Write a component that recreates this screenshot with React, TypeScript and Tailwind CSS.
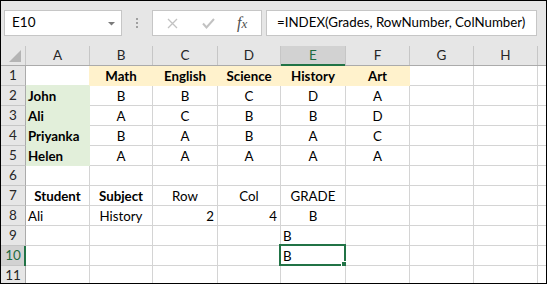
import React from "react";

type Cell = { t?: string; a?: "l" | "c" | "r"; b?: boolean; bg?: string };

const ORANGE = "#fff2cc";
const GREEN = "#e2efda";
const GRID = "#d4d4d4";

const COLW = [64, 63, 65, 63, 65, 64, 64, 64, 9];
const LETTERS = ["A", "B", "C", "D", "E", "F", "G", "H", ""];

const e = (): Cell => ({});
const rows: Cell[][] = [
  [e(), { t: "Math", a: "c", b: true, bg: ORANGE }, { t: "English", a: "c", b: true, bg: ORANGE }, { t: "Science", a: "c", b: true, bg: ORANGE }, { t: "History", a: "c", b: true, bg: ORANGE }, { t: "Art", a: "c", b: true, bg: ORANGE }, e(), e(), e()],
  [{ t: "John", a: "l", b: true, bg: GREEN }, { t: "B", a: "c" }, { t: "B", a: "c" }, { t: "C", a: "c" }, { t: "D", a: "c" }, { t: "A", a: "c" }, e(), e(), e()],
  [{ t: "Ali", a: "l", b: true, bg: GREEN }, { t: "A", a: "c" }, { t: "C", a: "c" }, { t: "B", a: "c" }, { t: "B", a: "c" }, { t: "D", a: "c" }, e(), e(), e()],
  [{ t: "Priyanka", a: "l", b: true, bg: GREEN }, { t: "B", a: "c" }, { t: "A", a: "c" }, { t: "B", a: "c" }, { t: "A", a: "c" }, { t: "C", a: "c" }, e(), e(), e()],
  [{ t: "Helen", a: "l", b: true, bg: GREEN }, { t: "A", a: "c" }, { t: "A", a: "c" }, { t: "A", a: "c" }, { t: "A", a: "c" }, { t: "A", a: "c" }, e(), e(), e()],
  [e(), e(), e(), e(), e(), e(), e(), e(), e()],
  [{ t: "Student", a: "c", b: true }, { t: "Subject", a: "c", b: true }, { t: "Row", a: "c" }, { t: "Col", a: "c" }, { t: "GRADE", a: "c" }, e(), e(), e(), e()],
  [{ t: "Ali", a: "l" }, { t: "History", a: "c" }, { t: "2", a: "r" }, { t: "4", a: "r" }, { t: "B", a: "c" }, e(), e(), e(), e()],
  [e(), e(), e(), e(), { t: "B", a: "l" }, e(), e(), e(), e()],
  [e(), e(), e(), e(), { t: "B", a: "l" }, e(), e(), e(), e()],
  [e(), e(), e(), e(), e(), e(), e(), e(), e()],
];

export default function App() {
  return (
    <div
      className="w-[547px] h-[284px] border border-black overflow-hidden bg-white flex flex-col text-black"
      style={{ fontFamily: "Lato, 'Noto Sans', sans-serif" }}
    >
      {/* toolbar */}
      <div className="h-[45px] shrink-0 bg-[#e6e6e6] flex items-start pt-[9px] pl-[3px]">
        <div className="w-[118px] h-[26px] bg-white border border-[#c6c6c6] flex items-center pl-[7px] pr-[6px] justify-between">
          <span className="text-[13.5px] leading-none">E10</span>
          <svg width="7" height="4" viewBox="0 0 7 4" className="mt-[1px]">
            <polygon points="0,0 7,0 3.5,3.5" fill="#7a7a7a" />
          </svg>
        </div>
        <div className="w-[30px] h-[26px] flex flex-col items-center justify-center gap-[2px]">
          <div className="w-[2px] h-[2px] bg-[#a0a0a0]" />
          <div className="w-[2px] h-[2px] bg-[#a0a0a0]" />
          <div className="w-[2px] h-[2px] bg-[#a0a0a0]" />
        </div>
        <div className="w-[110px] h-[26px] bg-white border border-[#c6c6c6] flex items-center pl-[14px]">
          <svg width="11" height="11" viewBox="0 0 11 11">
            <path d="M1 1 L10 10 M10 1 L1 10" stroke="#c2c2c2" strokeWidth="1.3" fill="none" />
          </svg>
          <svg width="13" height="11" viewBox="0 0 13 11" className="ml-[24px]">
            <path d="M1 5.5 L4.5 9.5 L12 1" stroke="#c2c2c2" strokeWidth="2" fill="none" />
          </svg>
          <span
            className="ml-[22px] text-[16px] italic text-[#505050] leading-none"
            style={{ fontFamily: "'Liberation Serif', serif" }}
          >
            f<span className="text-[13px]">x</span>
          </span>
        </div>
        <div className="ml-[4px] w-[271px] h-[26px] bg-white border border-[#c6c6c6] flex items-center pl-[10px] overflow-hidden whitespace-nowrap">
          <span className="text-[13.3px] leading-none">=INDEX(Grades, RowNumber, ColNumber)</span>
        </div>
      </div>

      {/* column headers */}
      <div className="h-[20px] shrink-0 flex bg-[#e6e6e6] border-b border-[#ababab]">
        <div className="w-[25px] shrink-0 h-full border-r border-[#c6c6c6] relative">
          <svg width="25" height="19" viewBox="0 0 25 19" className="absolute left-0 top-0">
            <polygon points="20,4 20,16 8,16" fill="#b4b4b4" />
          </svg>
        </div>
        {LETTERS.map((l, i) => {
          const sel = l === "E";
          return (
            <div
              key={i}
              className={
                "shrink-0 h-full flex items-center justify-center text-[13.5px] border-r border-[#c6c6c6] relative " +
                (sel ? "bg-[#d2d2d2] text-[#1e6b41]" : "text-[#262626]")
              }
              style={{ width: COLW[i] }}
            >
              <span className="leading-none">{l}</span>
              {sel && <div className="absolute left-0 right-0 bottom-[-1px] h-[2px] bg-[#217346]" />}
            </div>
          );
        })}
      </div>

      {/* rows */}
      {rows.map((r, ri) => {
        const rowSel = ri === 9;
        const below = rows[ri + 1];
        return (
          <div key={ri} className="h-[20px] shrink-0 flex">
            <div
              className={
                "w-[25px] shrink-0 h-full flex items-center justify-center text-[13.5px] border-b border-[#c6c6c6] relative pt-[1px] " +
                (rowSel ? "bg-[#d2d2d2] text-[#1e6b41]" : "bg-[#e6e6e6] text-[#262626]")
              }
              style={{ borderRight: "1px solid #ababab" }}
            >
              <span className="leading-none">{ri + 1}</span>
              {rowSel && <div className="absolute right-[-1px] top-0 bottom-[-1px] w-[2px] bg-[#217346]" />}
            </div>
            {r.map((c, ci) => {
              const right = r[ci + 1];
              const down = below ? below[ci] : undefined;
              const rc = c.bg ?? right?.bg ?? GRID;
              const bc = c.bg ?? down?.bg ?? GRID;
              const sel = ri === 9 && ci === 4;
              return (
                <div
                  key={ci}
                  className={
                    "shrink-0 h-full flex items-center relative whitespace-nowrap text-[13.3px] pt-[2px] " +
                    (c.a === "c" ? "justify-center " : c.a === "r" ? "justify-end pr-[3px] " : "justify-start pl-[2px] ") +
                    (c.b ? "font-bold" : "")
                  }
                  style={{
                    width: COLW[ci],
                    background: c.bg ?? "#ffffff",
                    borderRight: `1px solid ${rc}`,
                    borderBottom: `1px solid ${bc}`,
                  }}
                >
                  <span className="leading-none">{c.t}</span>
                  {sel && (
                    <>
                      <div className="absolute left-[-2px] top-[-2px] right-[-1px] bottom-[-1px] border-2 border-[#217346] pointer-events-none" />
                      <div className="absolute right-[-2px] bottom-[-2px] w-[6px] h-[6px] bg-[#217346] border border-white" />
                    </>
                  )}
                </div>
              );
            })}
          </div>
        );
      })}
    </div>
  );
}
